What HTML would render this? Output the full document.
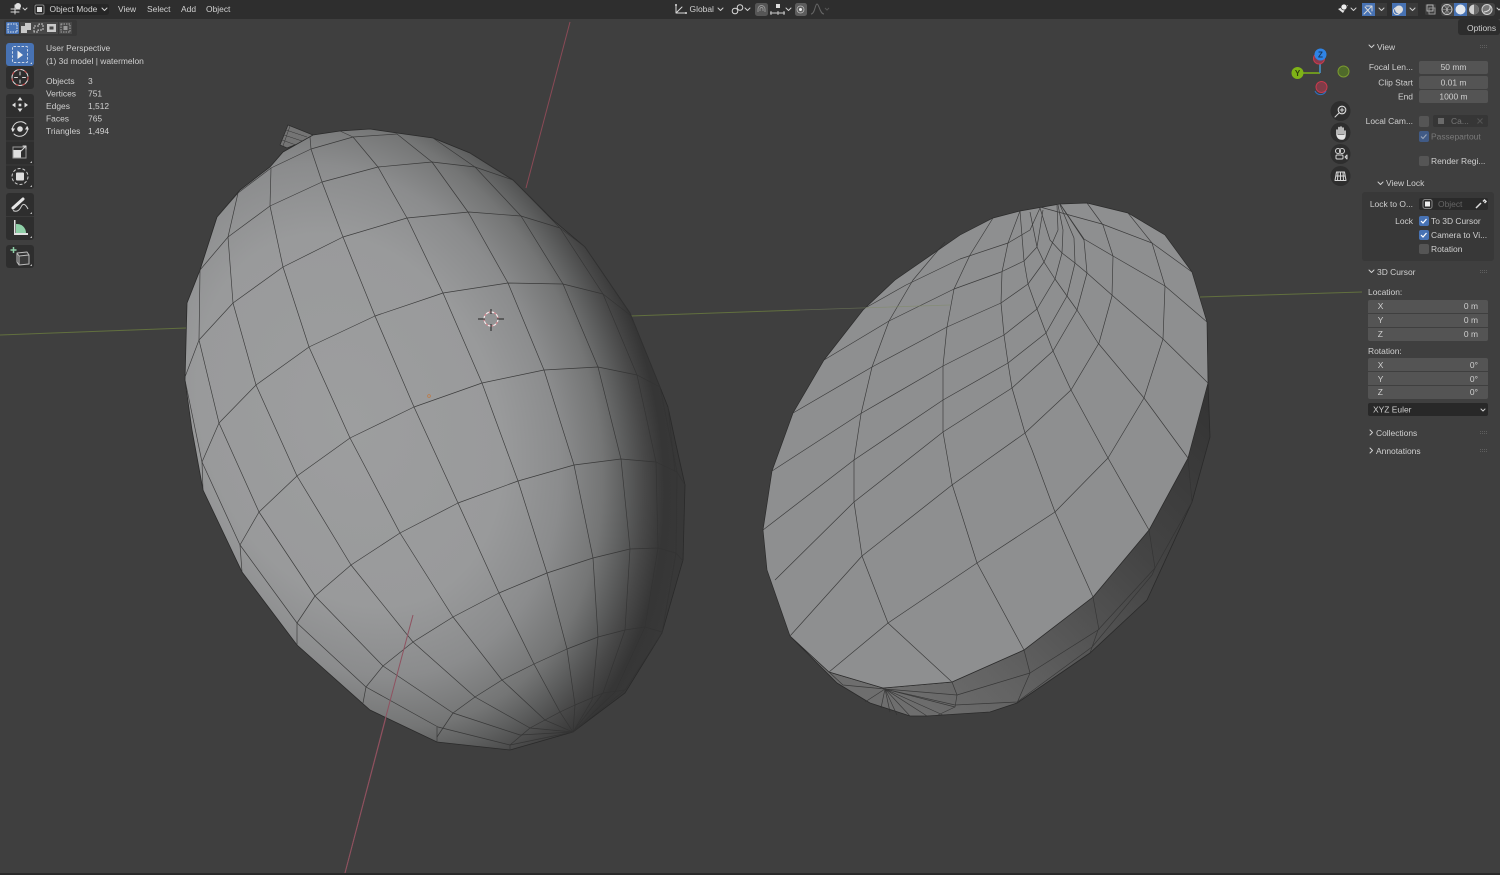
<!DOCTYPE html>
<html><head><meta charset="utf-8"><style>
html,body{margin:0;padding:0;background:#3f3f3f;overflow:hidden}
svg{display:block;filter:blur(.3px)}
text{font-family:"Liberation Sans",sans-serif;font-size:8.45px;fill:#d0d0d0}
.r{text-anchor:end}.c{text-anchor:middle}
.m{fill:none;stroke:#333;stroke-width:.68;stroke-linejoin:round;opacity:.9}
.i{fill:none;stroke:#d8d8d8;stroke-width:1;stroke-linecap:round;stroke-linejoin:round}
.ch{fill:none;stroke:#cfcfcf;stroke-width:1;stroke-linecap:round;stroke-linejoin:round}
.f{fill:#545454}.d{fill:#2e2e2e}
</style></head><body>
<svg width="1500" height="875" viewBox="0 0 1500 875" xmlns="http://www.w3.org/2000/svg">
<defs>
<radialGradient id="mel" gradientUnits="userSpaceOnUse" cx="0" cy="0" r="1" gradientTransform="translate(350 420) rotate(68) scale(480 365)">
<stop offset="0" stop-color="#9d9e9f"/><stop offset=".4" stop-color="#999a9b"/><stop offset=".55" stop-color="#8b8c8d"/><stop offset=".66" stop-color="#747575"/><stop offset=".72" stop-color="#5c5d5d"/><stop offset=".77" stop-color="#484848"/><stop offset=".82" stop-color="#363636"/><stop offset="1" stop-color="#3d3d3d"/>
</radialGradient>
<linearGradient id="skirt2" gradientUnits="userSpaceOnUse" x1="1200" y1="400" x2="900" y2="700">
<stop offset="0" stop-color="#353535"/><stop offset=".35" stop-color="#444"/><stop offset=".8" stop-color="#636363"/><stop offset="1" stop-color="#6e6e6e"/>
</linearGradient>
</defs>
<rect width="1500" height="875" fill="#3f3f3f"/>

<!-- axes -->
<path d="M570 22L526 188M413 615L345 873" stroke="#8a4a56" stroke-width="1" fill="none"/>
<path d="M0 335L186 328M630 316L800 310M1200 297L1362 292" stroke="#62703f" stroke-width="1" fill="none"/>

<!-- stem -->
<polygon points="288,125 313,135 300,143 287,148 280,145" fill="#747474" stroke="#2b2b2b" stroke-width=".7"/>
<path d="M286 130L307 137M284 135L302 141M282 140L296 145M290 126L283 146" stroke="#333" stroke-width=".5" fill="none"/>

<!-- left melon -->
<polygon fill="url(#mel)" stroke="#2a2a2a" stroke-width=".8" points="313,135 340,131 370,129 397,133 433,138 470,153 513,180 553,220 585,247 630,313 660,387 668,407 675,440 685,485 683,560 662,633 625,693 573,732 510,750 437,742 370,710 297,645 242,572 203,490 192,430 185,380 187,303 200,270 217,217 240,190 270,167 283,152"/>
<g class="m">
<polyline points="217,217 238,193 271,168 311,149 353,137 397,134"/>
<polyline points="200,270 228,237 270,206 322,182 378,167 432,162 475,167 513,180"/>
<polyline points="185,377 199,340 233,303 283,267 343,237 407,218 469,212 521,216 560,228 585,247"/>
<polyline points="202,462 219,423 256,385 309,347 375,316 443,293 508,283 563,284 603,294 630,315"/>
<polyline points="240,545 259,512 297,476 350,438 414,407 482,383 544,370 598,367 637,375 660,387"/>
<polyline points="297,623 315,596 351,565 400,533 458,503 518,481 574,465 621,459 656,462 677,472 685,485"/>
<polyline points="366,687 383,666 413,642 453,617 499,593 547,573 593,558 630,549 658,548 676,553 683,561"/>
<polyline points="437,737 453,713 475,697 502,680 534,664 567,649 598,637 625,630 645,627 662,632"/>
<polyline points="510,745 530,728 560,712 575,705 603,693 625,690"/>
<polyline points="397,134 432,162 468,212 508,283 544,370 574,465 593,558 598,637 592,700 573,732"/>
<polyline points="340,131 353,137 378,167 407,218 443,293 482,383 518,481 547,573 567,649 575,705 573,732"/>
<polyline points="310,137 311,149 322,182 343,237 375,316 414,407 458,503 499,593 534,664 560,712 573,732"/>
<polyline points="271,168 270,206 283,267 309,347 350,438 400,533 453,617 502,680 545,720 573,732"/>
<polyline points="238,193 228,237 233,303 256,385 297,476 351,565 413,642 475,697 530,728 573,732"/>
<polyline points="200,270 199,340 219,423 259,512 315,596 383,666 453,713 520,735 573,732"/>
<polyline points="185,380 202,462 240,545 297,623 366,687 438,727 510,745 573,732"/>
<polyline points="433,138 475,167 521,216 563,284 598,367 621,459 630,549 625,630 603,693 573,732"/>
<polyline points="470,153 513,180 560,228 603,294 637,375 656,462 658,548 645,627 615,692 573,732"/>
<polyline points="585,247 630,313 660,387 677,472 676,553 662,633 625,690 573,732"/>
<path d="M202 462L203 490M240 545L242 572M297 623L297 645M366 687L363 703M437 727L437 742M668 407L675 472M510 745L510 750"/>
</g>
<path d="M413 615L398 671L385 720L345 873" stroke="#8f5260" stroke-width="1" fill="none"/>

<!-- 3D cursor and origin -->
<circle cx="491" cy="319" r="7" fill="none" stroke="#d88a92" stroke-width="1.2"/>
<circle cx="491" cy="319" r="7" fill="none" stroke="#eee" stroke-width="1.2" stroke-dasharray="3 2.5"/>
<path d="M478 319H485M497 319H504M491 309V314M491 324V331" stroke="#222" stroke-width="1"/>
<circle cx="429" cy="396" r="1.4" fill="#9c9d9e" stroke="#c07840" stroke-width=".7"/>

<!-- right disc skirt -->
<polygon fill="url(#skirt2)" stroke="#2a2a2a" stroke-width=".8" points="1207,322 1208,383 1210,437 1205,455 1192,502 1147,600 1090,653 1017,703 990,712 927,716 910,716 870,703 837,683 790,636 829,672 883,688 952,682 1024,650 1093,597 1149,530 1188,458"/>
<g class="m">
<path d="M1188 458L1192 502M1149 530L1155 568M1093 597L1099 630M1024 650L1030 673M952 682L957 695"/>
<polyline points="1192,502 1155,568 1098,630 1030,673 957,695 885,689"/>
<polyline points="1155,568 1152,575 1092,647 1017,702 955,705 885,689"/>
<path d="M1098 630L1090 653M1030 673L1017 703M957 695L955 707L938 715"/>
<path d="M885 689L910 716M885 689L927 716M885 689L897 715M885 689L890 712M885 689L943 715M885 689L955 707M829 672L843 685L885 689M865 702L885 689M881 708L885 689"/>
</g>
<!-- right disc face -->
<polygon fill="#8e8f90" stroke="#2c2c2c" stroke-width=".7" points="960,235 993,218 1020,211 1060,204 1087,203 1128,213 1165,235 1192,272 1207,322 1208,383 1188,458 1149,530 1093,597 1024,650 952,682 883,688 829,672 790,636 767,570 763,530 772,471 793,413 824,360 863,310 895,280"/>
<g class="m">
<polyline points="1020,211 1008,243 1002,272 1001,303 1004,335 1008,363 1012,388 1025,433 1032,450 1055,512 1093,597"/>
<polyline points="1020,211 1024,261 1028,284 1037,309 1046,333 1053,351 1071,390 1108,458 1149,530"/>
<polyline points="1030,212 1037,247 1044,262 1055,279 1067,296 1077,310 1098,343 1144,398 1188,458"/>
<polyline points="1040,208 1050,240 1062,253 1075,263 1087,273 1113,296 1163,339 1208,383"/>
<polyline points="1040,207 1102,224 1152,243 1192,272"/>
<polyline points="1060,204 1084,239 1113,256 1165,286 1207,322"/>
<polyline points="1087,203 1103,225 1113,256 1112,296 1099,343 1071,390 1025,433 987,460 952,485 862,556 790,636"/>
<polyline points="1128,213 1152,243 1165,286 1163,339 1144,398 1108,458 1055,512 977,563 888,623 829,672"/>
<polyline points="867,307 906,285 960,259 1008,243 1030,230 1040,208"/>
<polyline points="824,360 889,321 954,289 1001,272 1024,261 1037,247 1043,210"/>
<polyline points="793,413 872,367 947,327 1001,303 1028,284 1044,262 1058,230 1057,205"/>
<polyline points="772,471 860,414 943,366 1004,335 1037,309 1055,279 1062,253 1063,230 1058,205"/>
<polyline points="763,530 854,460 943,400 1008,363 1046,333 1067,296 1075,263 1074,238 1060,205"/>
<polyline points="775,580 854,502 943,432 1012,388 1053,351 1077,310 1087,273 1084,240 1060,204"/>
<polyline points="993,218 970,255 954,289 947,327 943,366 943,400 943,432 952,484 977,563 1024,650"/>
<polyline points="945,242 913,280 889,321 872,367 861,414 854,460 854,502 862,556 888,623 952,682"/>
</g>
<path d="M800 310L950 305" stroke="#7d8a60" stroke-width=".8" fill="none" opacity=".55"/>

<!-- header -->
<rect width="1500" height="19" fill="#2e2e2e"/>
<!-- editor type -->
<path d="M11 9H20M15 5V14M11 12H19" class="i" stroke-width=".8"/><circle cx="18" cy="6" r="3" fill="#e0e0e0"/>
<path class="ch" d="M23 8l2 2 2-2"/>
<rect x="33" y="4" width="76" height="11" rx="2.5" fill="#262626"/>
<rect x="35" y="5" width="9" height="9" rx="1.5" fill="none" stroke="#888" stroke-width="1"/><rect x="37" y="7" width="5" height="5" fill="#ddd"/>
<text x="49.5" y="12">Object Mode</text><path class="ch" d="M102 8l2.5 2.5L107 8"/>
<text x="118" y="12">View</text><text x="147" y="12">Select</text><text x="181" y="12">Add</text><text x="206" y="12">Object</text>
<!-- center header -->
<path class="i" d="M676 5V13H686M676 13L682 7" stroke-width=".9"/><circle cx="676" cy="5" r="1" fill="#ddd"/><circle cx="686" cy="13" r="1" fill="#ddd"/>
<text x="689.5" y="12">Global</text><path class="ch" d="M718 8l2.5 2.5L723 8"/>
<circle cx="735" cy="11" r="2.8" class="i"/><circle cx="740" cy="7.5" r="2.8" class="i"/><path class="ch" d="M745 8l2.5 2.5L750 8"/>
<rect x="755" y="3" width="13" height="13" rx="2.5" fill="#565656"/><path d="M758 12V9a3.5 3.5 0 0 1 7 0V12M760 11V9a1.5 1.5 0 0 1 3 0V11" fill="none" stroke="#999" stroke-width=".9"/>
<rect x="776" y="4" width="4" height="4" fill="#ddd"/><path d="M770 13H785M771 11V15M778 11V15M784 11V15" stroke="#cfcfcf" stroke-width=".9" fill="none"/><path class="ch" d="M786 8l2.5 2.5L791 8"/>
<rect x="795" y="3" width="12" height="13" rx="2.5" fill="#5d5d5d"/><circle cx="800.500" cy="9.500" r="3.500" fill="none" stroke="#bbb" stroke-width=".8"/><circle cx="800.500" cy="9.500" r="1.500" fill="#eee"/>
<path d="M811 14C815 14 815 4 817 4S820 14 824 14" fill="none" stroke="#666" stroke-width="1"/><path d="M825 8l2 2 2-2" fill="none" stroke="#555" stroke-width="1"/>
<!-- right header -->
<path d="M1338 9L1348 5L1343 13Z" fill="#e6e6e6"/><circle cx="1344" cy="7" r="3" fill="#eee" stroke="#333" stroke-width=".7"/>
<path class="ch" d="M1351 8l2.500 2.500L1356 8"/>
<rect x="1362" y="3" width="13" height="13" fill="#4772b3"/><path class="i" d="M1364 14L1372 6M1366 6H1372V11M1365 7L1371 14" stroke-width=".9"/>
<rect x="1375" y="3" width="12" height="13" fill="#3a3a3a"/><path class="ch" d="M1379 8l2.500 2.500L1384 8"/>
<rect x="1392" y="3" width="14" height="13" fill="#4772b3"/><circle cx="1399" cy="9.500" r="4" fill="#ddd"/><circle cx="1397" cy="11" r="3.500" fill="none" stroke="#ddd" stroke-width="1"/>
<rect x="1406" y="3" width="12" height="13" fill="#3a3a3a"/><path class="ch" d="M1410 8l2.500 2.500L1415 8"/>
<rect x="1425" y="4" width="11" height="11" rx="1.500" fill="#3d3d3d"/><rect x="1427" y="5" width="6" height="6" fill="none" stroke="#bbb" stroke-width=".9"/><rect x="1429" y="8" width="6" height="6" fill="none" stroke="#999" stroke-width=".9"/>
<rect x="1441" y="3" width="54" height="13" rx="3" fill="#444"/><rect x="1454" y="3" width="13" height="13" fill="#4772b3"/>
<circle cx="1447" cy="9.500" r="5" fill="none" stroke="#ccc" stroke-width=".9"/><path d="M1442 9.500H1452M1447 4.500V14.500M1444 5.500Q1449 9.500 1444 13.500M1450 5.500Q1445 9.500 1450 13.500" stroke="#aaa" stroke-width=".6" fill="none"/>
<circle cx="1460.500" cy="9.500" r="5" fill="#e4e8ee"/>
<circle cx="1474" cy="9.500" r="5" fill="#cfcfcf"/><path d="M1474 4.500A5 5 0 0 1 1474 14.500Z" fill="#6c6c6c"/>
<circle cx="1487" cy="9.500" r="5" fill="#777" stroke="#d0d0d0" stroke-width="1"/><path d="M1484 12Q1491 11 1490 6" stroke="#ddd" fill="none" stroke-width="1"/>
<path class="ch" d="M1497 8l2 2 1-1"/>

<!-- select mode row -->
<rect x="4" y="20" width="73" height="16" rx="2" fill="#383838"/>
<rect x="6" y="22" width="13" height="12" rx="1" fill="#4772b3"/><rect x="8" y="24" width="9" height="8" fill="none" stroke="#dfe7f2" stroke-width="1" stroke-dasharray="1.500 1"/>
<rect x="20" y="22" width="12" height="12" fill="#484848"/><path d="M21 33V26H25V23H31V30H27V33Z" fill="#c9c9c9"/>
<rect x="32" y="22" width="13" height="12" fill="#484848"/><path d="M34 32V26H39V24H43V30H38V32Z" fill="none" stroke="#c9c9c9" stroke-width="1" stroke-dasharray="2 1"/>
<rect x="45" y="22" width="13" height="12" fill="#484848"/><path d="M47 24H56V32H47ZM49.500 26.500V29.500H53.500V26.500Z" fill="#c9c9c9" fill-rule="evenodd"/>
<rect x="59" y="22" width="13" height="12" fill="#484848"/><rect x="61" y="24" width="9" height="8" fill="none" stroke="#aaa" stroke-width="1" stroke-dasharray="1.500 1"/><rect x="63.500" y="26" width="4" height="4" fill="#999"/>

<!-- toolbar -->
<rect x="6" y="43" width="28" height="23" rx="3" fill="#4772b3"/>
<rect x="12.500" y="46.500" width="15" height="16" rx="1" fill="none" stroke="#ccd6e6" stroke-width="1" stroke-dasharray="2.500 1.500"/><path d="M17.500 50.500V59L23 55Z" fill="#f0f0f0"/><path d="M32 64l-1.800 0 1.800-1.800z" fill="#e0e0e0"/>
<rect x="6" y="66" width="28" height="23" rx="3" fill="#2e2e2e"/>
<circle cx="20" cy="77.500" r="8" fill="none" stroke="#ddd" stroke-width="1"/><circle cx="20" cy="77.500" r="8" fill="none" stroke="#c44" stroke-width="1" stroke-dasharray="3 4"/><path class="i" d="M20 72V75M20 80V83M14.500 77.500H17.500M22.500 77.500H25.500"/>
<rect x="6" y="94" width="28" height="95" rx="3" fill="#2e2e2e"/><path d="M6 117.500H34M6 141H34M6 165H34" stroke="#3a3a3a"/>
<path fill="#e0e0e0" d="M20 97l2.500 3.500h-5zM20 112l-2.500-3.500h5zM12 105l3.500-2.500v5zM28 105l-3.500 2.500v-5z"/><rect x="18.700" y="103.700" width="2.600" height="2.600" fill="#ddd"/>
<circle cx="20" cy="129" r="2.800" fill="#ddd"/><path class="i" stroke-width="1.200" d="M12.500 131A8 8 0 0 1 26 124M27.500 127A8 8 0 0 1 14 134"/><path fill="#ddd" d="M11 128.500h4l-2 3.500zM29 129.500h-4l2-3.500z"/>
<rect x="13" y="150" width="8" height="8" fill="#dfdfdf"/><rect x="13" y="147" width="13" height="11" fill="none" stroke="#999" stroke-width="1"/><path class="i" d="M21 151L26 146M23 146H26V149"/><path d="M32 163l-2 0 2-2z" fill="#bbb"/>
<circle cx="20" cy="176.500" r="8" fill="none" stroke="#ccc" stroke-width="1" stroke-dasharray="3 2"/><rect x="16" y="172.500" width="8" height="8" rx="1" fill="#ddd"/><path d="M32 187l-2 0 2-2z" fill="#bbb"/>
<rect x="6" y="193" width="28" height="47" rx="3" fill="#2e2e2e"/><path d="M6 216.500H34" stroke="#3a3a3a"/>
<path d="M13 208L23 199" stroke="#e6e6e6" stroke-width="3" stroke-linecap="round" fill="none"/><path d="M13 210.500Q18 213 21 207T28 209" fill="none" stroke="#cfcfcf" stroke-width="1"/><path d="M32 214l-2 0 2-2z" fill="#bbb"/>
<path d="M14 235V220L15.500 220V233H28V235Z" fill="#e0e0e0"/><path d="M16 233V224A9 9 0 0 1 26 233Z" fill="#8fd0a8"/><path d="M32 238l-2 0 2-2z" fill="#bbb"/>
<rect x="6" y="245" width="28" height="23" rx="3" fill="#2e2e2e"/>
<path d="M17 253L27 252L29 255V264L19 265L17 262ZM17 253L19 256L29 255M19 256V265" fill="#3a3a3a" stroke="#bbb" stroke-width="1" stroke-linejoin="round"/><path d="M13.500 247V253M10.500 250H16.500" stroke="#8fd0a8" stroke-width="1.500"/><path d="M32 266l-2 0 2-2z" fill="#bbb"/>

<!-- overlay text -->
<text x="46" y="51">User Perspective</text>
<text x="46" y="64">(1) 3d model | watermelon</text>
<text x="46" y="84">Objects</text><text x="88" y="84">3</text>
<text x="46" y="96.500">Vertices</text><text x="88" y="96.500">751</text>
<text x="46" y="109">Edges</text><text x="88" y="109">1,512</text>
<text x="46" y="121.500">Faces</text><text x="88" y="121.500">765</text>
<text x="46" y="134">Triangles</text><text x="88" y="134">1,494</text>

<!-- gizmo -->
<path d="M1320 73V60M1320 73H1302" stroke-width="1.500" fill="none" stroke="#7fb317"/><path d="M1320 73V60" stroke="#3d82d8" stroke-width="1.500" fill="none"/>
<circle cx="1319" cy="58.500" r="5.500" fill="#8b3a4b" stroke="#c93a4d" stroke-width="1"/>
<circle cx="1320.500" cy="54.500" r="6" fill="#2f84e6"/><text x="1320.500" y="57.500" class="c" style="fill:#16355c;font-weight:bold;font-size:8px">Z</text>
<circle cx="1297.500" cy="73" r="6" fill="#7fb317"/><text x="1297.500" y="76" class="c" style="fill:#2e400a;font-weight:bold;font-size:8px">Y</text>
<circle cx="1343.500" cy="71.500" r="5.500" fill="#4f6a2a" stroke="#7a9930" stroke-width="1"/>
<path d="M1315 91A6 6 0 0 0 1326 91" fill="none" stroke="#2f6fc0" stroke-width="1"/>
<circle cx="1321.500" cy="87" r="5.500" fill="#7f3c48" stroke="#c93a4d" stroke-width="1"/>

<!-- nav buttons -->
<circle cx="1340.500" cy="111" r="10" class="d"/><circle cx="1342" cy="110" r="3.800" fill="none" stroke="#ddd" stroke-width="1.100"/><path class="i" stroke-width="1.600" d="M1339 113L1335 117"/><path class="i" stroke-width=".8" d="M1342 108V112M1340 110H1344"/>
<circle cx="1340.500" cy="132.500" r="10" class="d"/><path d="M1337 135V130M1339 134V127.500M1341 134V127M1343 134V128M1345 135V131M1337 135Q1338 139 1341 139H1343Q1345 138 1345 135" stroke="#e4e4e4" stroke-width="1.500" fill="#e4e4e4" stroke-linecap="round"/>
<circle cx="1340.500" cy="154" r="10" class="d"/><circle cx="1338" cy="151" r="2.500" class="i"/><circle cx="1342" cy="151" r="2.500" class="i"/><rect x="1336" y="155" width="7" height="4" rx="1" class="i"/><path class="i" d="M1345 157L1347 155V159Z"/>
<circle cx="1340.500" cy="176" r="10" class="d"/><path class="i" stroke-width=".8" d="M1336.500 172H1344.500L1346 180.500H1335ZM1336 176H1345M1340.500 172V180.500M1338 172L1337.500 180.500M1343 172L1343.500 180.500"/>

<!-- right panel -->
<rect x="1362" y="36" width="138" height="439" fill="#3f3f3f"/>
<rect x="1458" y="19" width="42" height="16" rx="3" fill="#2d2d2d"/>
<text x="1467" y="31">Options</text>
<path class="ch" d="M1369 45l2.500 2.500L1374 45"/><text x="1377" y="50">View</text>
<g fill="#5e5e5e"><path d="M1480 45h1v1h-1zM1482 45h1v1h-1zM1484 45h1v1h-1zM1486 45h1v1h-1zM1480 47h1v1h-1zM1482 47h1v1h-1zM1484 47h1v1h-1zM1486 47h1v1h-1z"/></g>
<text x="1413" y="70" class="r">Focal Len...</text><rect x="1419" y="61" width="69" height="13" rx="2" class="f"/><text x="1453.500" y="70" class="c">50 mm</text>
<text x="1413" y="85.500" class="r">Clip Start</text><rect x="1419" y="76" width="69" height="13" rx="2" class="f"/><text x="1453.500" y="85.500" class="c">0.01 m</text>
<text x="1413" y="99.500" class="r">End</text><rect x="1419" y="90" width="69" height="13" rx="2" class="f"/><text x="1453.500" y="99.500" class="c">1000 m</text>
<text x="1413" y="124" class="r">Local Cam...</text>
<rect x="1419" y="116" width="10" height="11" rx="2" fill="#555"/>
<rect x="1433" y="115" width="55" height="12" rx="2" fill="#363636"/><rect x="1438" y="118" width="6" height="6" fill="#6a6a6a"/><text x="1451" y="124" style="fill:#777">Ca...</text><path d="M1477.500 118.500l5 5m0-5l-5 5" stroke="#555" stroke-width="1"/>
<rect x="1419" y="131" width="10" height="11" rx="2" fill="#405a85"/><path d="M1421 136.500l2 2 3.500-4" fill="none" stroke="#9aa6b8" stroke-width="1.100"/><text x="1431" y="139.500" style="fill:#7a7a7a">Passepartout</text>
<rect x="1419" y="156" width="10" height="10" rx="2" fill="#555"/><text x="1431" y="164">Render Regi...</text>
<path class="ch" d="M1378 182l2.500 2.500L1383 182"/><text x="1386" y="186">View Lock</text>
<rect x="1362" y="192" width="132" height="69" rx="3" fill="#383838"/>
<text x="1413" y="207" class="r">Lock to O...</text><rect x="1419" y="198" width="69" height="12" rx="2" fill="#2a2a2a"/>
<rect x="1423" y="199.500" width="9" height="9" rx="2" fill="none" stroke="#888"/><rect x="1425" y="201.500" width="5" height="5" fill="#eee"/><text x="1438" y="207" style="fill:#666">Object</text>
<path d="M1476 208L1481 203M1483 201.500L1484.500 200L1486 201.500L1484.500 203" stroke="#ddd" stroke-width="1.500" fill="none"/>
<text x="1413" y="224" class="r">Lock</text>
<rect x="1419" y="216" width="10" height="10" rx="2" fill="#4772b3"/><path d="M1421 221l2 2 3.500-4" fill="none" stroke="#fff" stroke-width="1.200"/><text x="1431" y="224">To 3D Cursor</text>
<rect x="1419" y="230" width="10" height="10" rx="2" fill="#4772b3"/><path d="M1421 235l2 2 3.500-4" fill="none" stroke="#fff" stroke-width="1.200"/><text x="1431" y="238">Camera to Vi...</text>
<rect x="1419" y="244" width="10" height="10" rx="2" fill="#555"/><text x="1431" y="252">Rotation</text>
<path class="ch" d="M1369 270l2.500 2.500L1374 270"/><text x="1377" y="275">3D Cursor</text>
<g fill="#5e5e5e"><path d="M1480 270h1v1h-1zM1482 270h1v1h-1zM1484 270h1v1h-1zM1486 270h1v1h-1zM1480 272h1v1h-1zM1482 272h1v1h-1zM1484 272h1v1h-1zM1486 272h1v1h-1z"/></g>
<text x="1368" y="295">Location:</text>
<rect x="1368" y="300" width="120" height="41" rx="2" class="f"/><path d="M1368 313.500H1488M1368 327.500H1488" stroke="#3f3f3f"/>
<text x="1373" y="309">&#160;&#160;X</text><text x="1478" y="309" class="r">0 m</text>
<text x="1373" y="323">&#160;&#160;Y</text><text x="1478" y="323" class="r">0 m</text>
<text x="1373" y="337">&#160;&#160;Z</text><text x="1478" y="337" class="r">0 m</text>
<text x="1368" y="354">Rotation:</text>
<rect x="1368" y="358" width="120" height="41" rx="2" class="f"/><path d="M1368 371.500H1488M1368 385.500H1488" stroke="#3f3f3f"/>
<text x="1373" y="368">&#160;&#160;X</text><text x="1478" y="368" class="r">0°</text>
<text x="1373" y="382">&#160;&#160;Y</text><text x="1478" y="382" class="r">0°</text>
<text x="1373" y="395">&#160;&#160;Z</text><text x="1478" y="395" class="r">0°</text>
<rect x="1368" y="403" width="120" height="13" rx="2" fill="#282828"/><text x="1373" y="412.500">XYZ Euler</text><path class="ch" d="M1481 409l2 2 2-2"/>
<path class="ch" d="M1370 430l2.500 2.500L1370 435"/><text x="1376" y="436">Collections</text>
<path class="ch" d="M1370 448l2.500 2.500L1370 453"/><text x="1376" y="454">Annotations</text>
<g fill="#5e5e5e"><path d="M1480 431h1v1h-1zM1482 431h1v1h-1zM1484 431h1v1h-1zM1486 431h1v1h-1zM1480 433h1v1h-1zM1482 433h1v1h-1zM1484 433h1v1h-1zM1486 433h1v1h-1zM1480 449h1v1h-1zM1482 449h1v1h-1zM1484 449h1v1h-1zM1486 449h1v1h-1zM1480 451h1v1h-1zM1482 451h1v1h-1zM1484 451h1v1h-1zM1486 451h1v1h-1z"/></g>
<rect y="873" width="1500" height="2" fill="#2a2a2a"/>
</svg>
</body></html>
